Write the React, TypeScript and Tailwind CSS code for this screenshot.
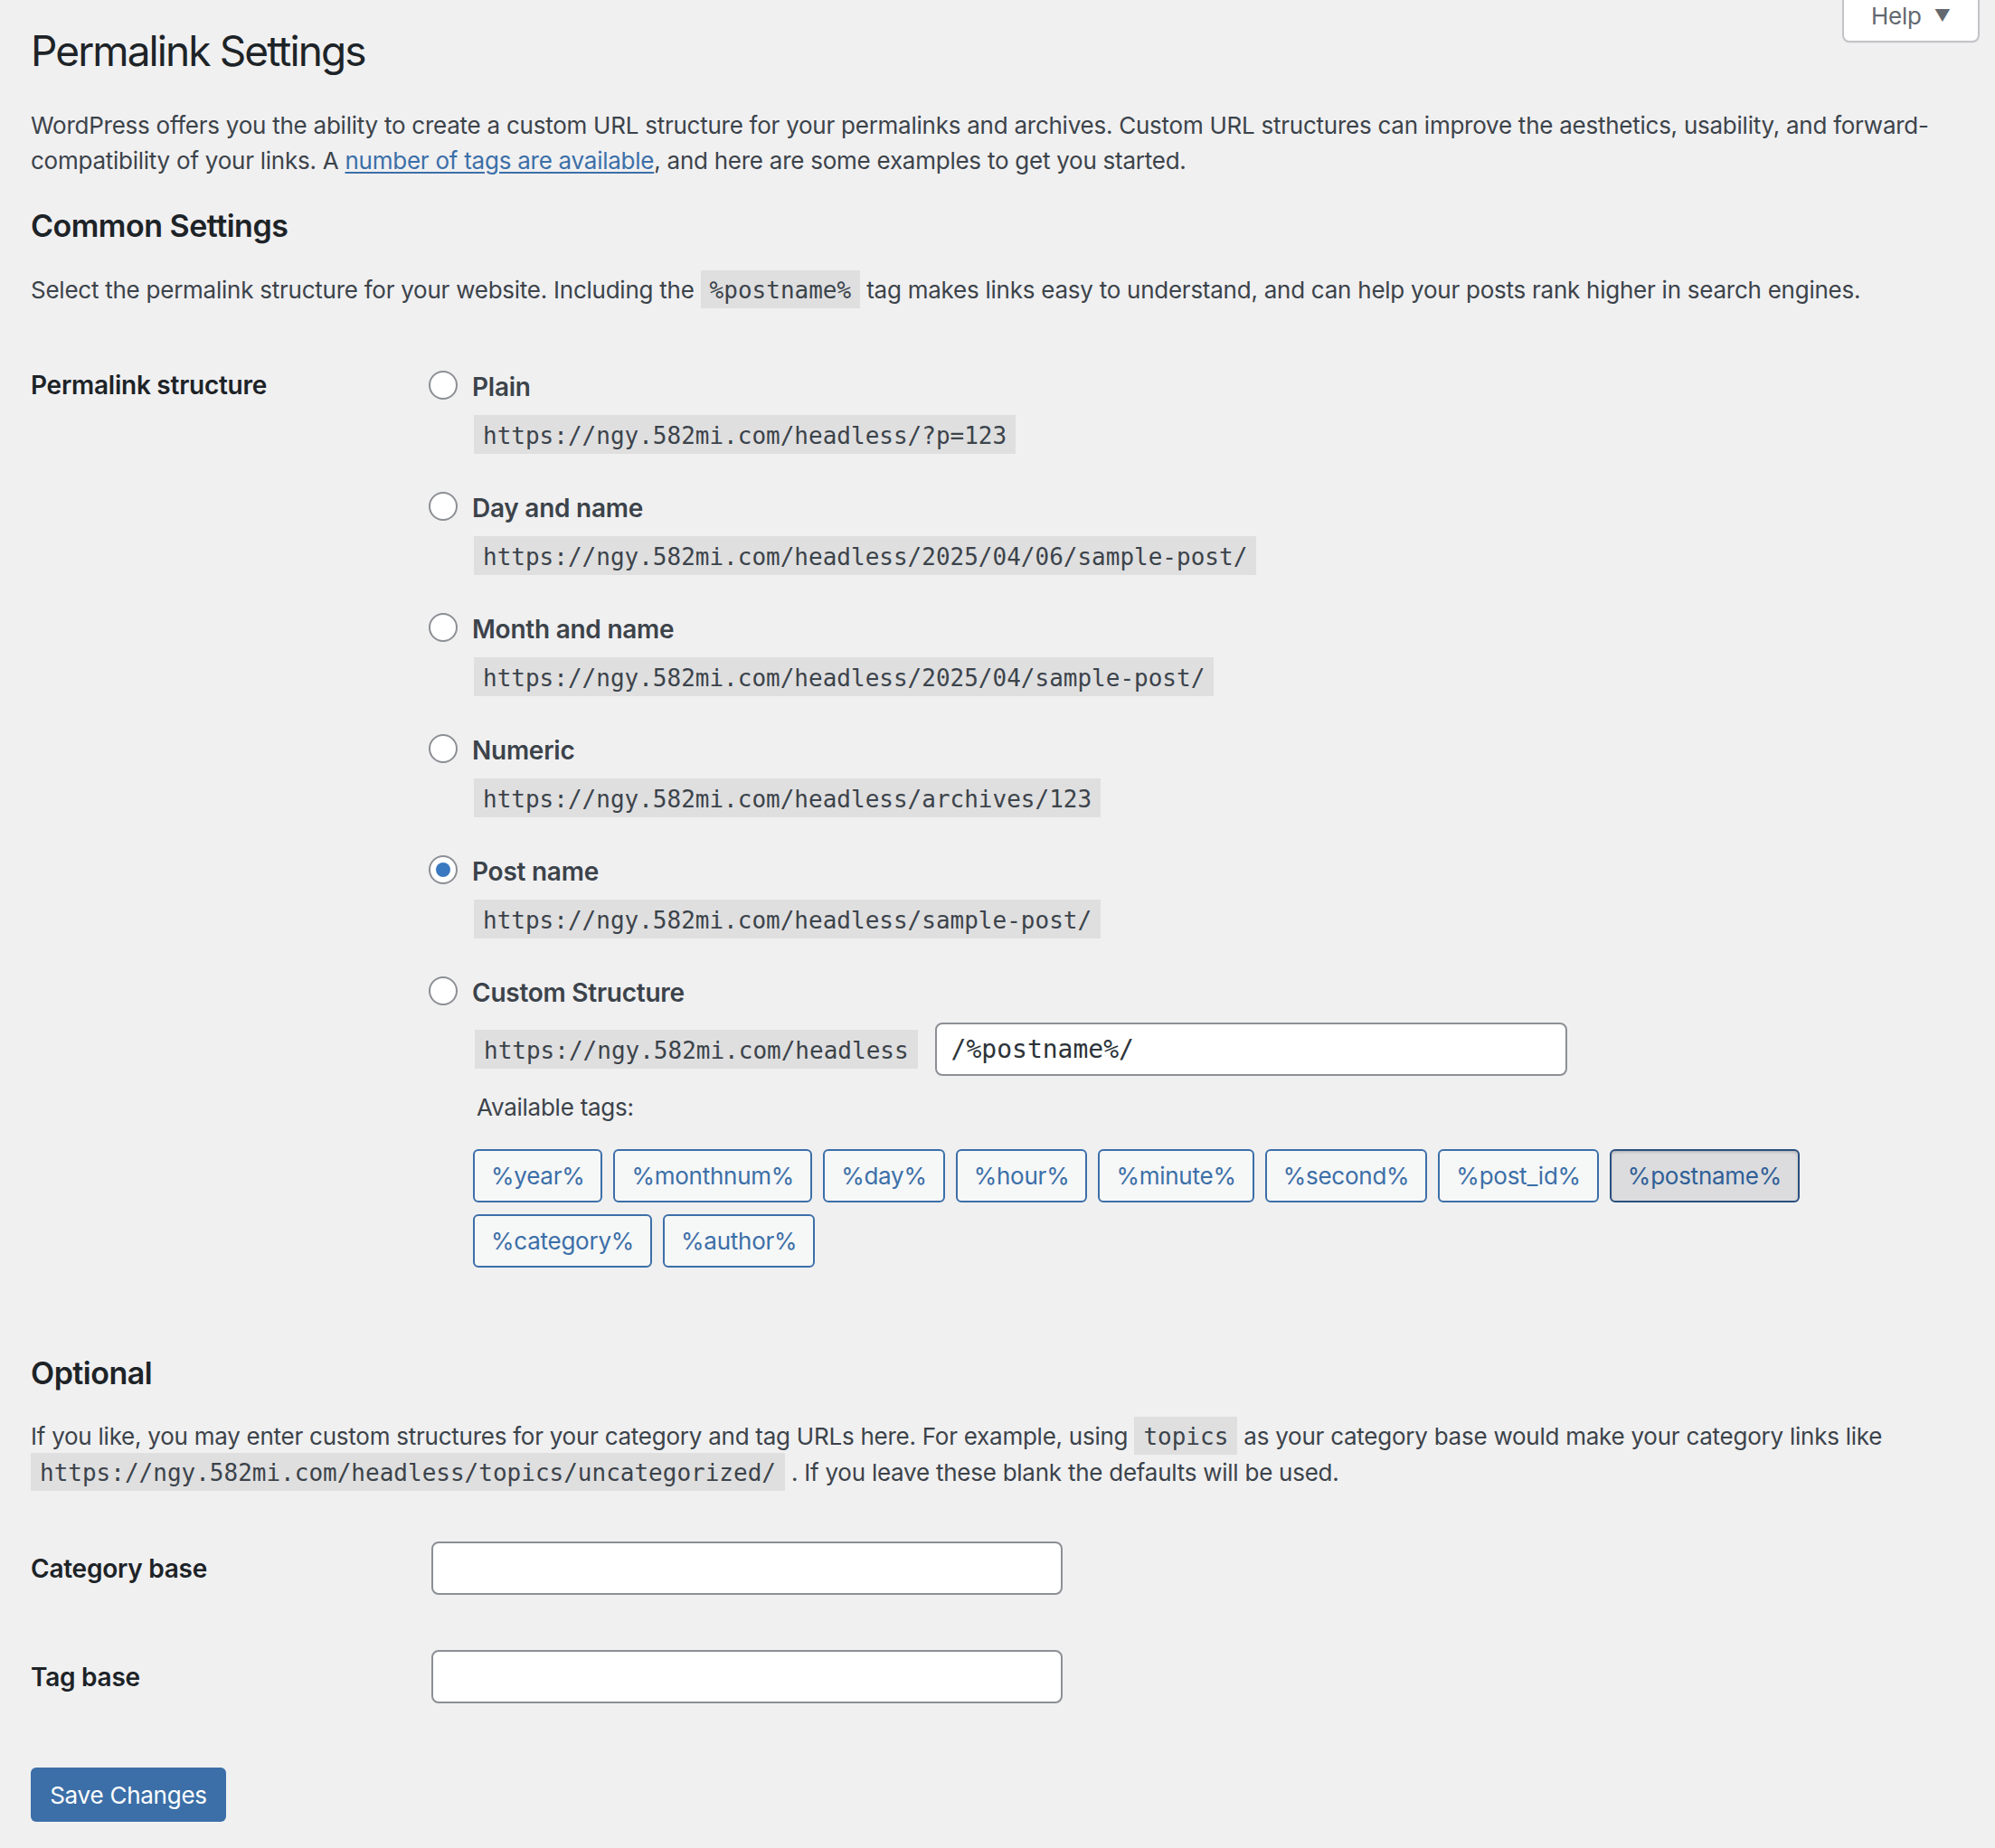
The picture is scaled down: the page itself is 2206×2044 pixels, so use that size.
import React from 'react';

const SITE = 'https://ngy.582mi.com/headless';

const options = [
  { id: 'plain', label: 'Plain', example: `${SITE}/?p=123` },
  { id: 'day', label: 'Day and name', example: `${SITE}/2025/04/06/sample-post/` },
  { id: 'month', label: 'Month and name', example: `${SITE}/2025/04/sample-post/` },
  { id: 'numeric', label: 'Numeric', example: `${SITE}/archives/123` },
  { id: 'post', label: 'Post name', example: `${SITE}/sample-post/` },
];

const tags = [
  '%year%',
  '%monthnum%',
  '%day%',
  '%hour%',
  '%minute%',
  '%second%',
  '%post_id%',
  '%postname%',
  '%category%',
  '%author%',
];

// standalone code sample (its own row)
const CodeBlock: React.FC<{ children: React.ReactNode }> = ({ children }) => (
  <code className="block bg-black/[0.07] px-[10px] pt-[8px] pb-[4px] font-['DejaVu_Sans_Mono',monospace] text-[26px] leading-[31px] tracking-normal text-[#3c434a]">
    {children}
  </code>
);

// code inside running text
const Code: React.FC<{ children: React.ReactNode }> = ({ children }) => (
  <code className="bg-black/[0.07] px-[10px] pt-[7px] pb-[5px] font-['DejaVu_Sans_Mono',monospace] text-[26px] tracking-normal text-[#3c434a]">
    {children}
  </code>
);

const Radio: React.FC<{ checked?: boolean }> = ({ checked }) => (
  <span className="flex h-[32px] w-[32px] shrink-0 items-center justify-center rounded-full border-2 border-[#8c8f94] bg-white">
    {checked && <span className="h-[16px] w-[16px] rounded-full bg-[#3a78c0]" />}
  </span>
);

export default function App() {
  const selected = 'post';

  return (
    <div className="relative min-h-[2044px] w-full bg-[#f0f0f1] font-['Inter','Liberation_Sans',sans-serif] text-[#3c434a]">
      {/* help tab */}
      <button className="absolute right-[17px] top-[-2px] flex h-[49px] w-[152px] items-center justify-center gap-[14px] rounded-b-[8px] border-2 border-[#c3c4c7] bg-white pb-[10px] text-[26px] text-[#646970] shadow-[0_1px_1px_rgba(0,0,0,0.04)]">
        <span className="tracking-[-0.2px]">Help</span>
        <span className="text-[18px]">▼</span>
      </button>

      <div className="pl-[34px] pr-[60px] tracking-[-0.25px]">
        <h1 className="pt-[26px] text-[46px] font-normal leading-[60px] tracking-[-1.9px] text-[#1d2327]">
          Permalink Settings
        </h1>

        <p className="mt-[33px] text-[26px] leading-[39px]">
          WordPress offers you the ability to create a custom URL structure for your permalinks and archives. Custom
          URL structures can improve the aesthetics, usability, and forward-compatibility of your links. A{' '}
          <a href="#" className="text-[#3c6fa8] underline underline-offset-[3px]">
            number of tags are available
          </a>
          , and here are some examples to get you started.
        </p>

        <h2 className="mt-[31px] text-[34px] font-semibold leading-[44px] tracking-[-0.5px] text-[#1d2327]">
          Common Settings
        </h2>

        <p className="mt-[29px] text-[26px] leading-[39px]">
          Select the permalink structure for your website. Including the <Code>%postname%</Code> tag makes links easy
          to understand, and can help your posts rank higher in search engines.
        </p>

        {/* permalink structure */}
        <div className="mt-[69px] flex">
          <div className="w-[440px] shrink-0 text-[28px] font-semibold leading-[32px] text-[#1d2327]">
            Permalink structure
          </div>
          <div className="flex flex-col">
            {options.map((o) => (
              <div key={o.id} className="mb-[42px] flex flex-col">
                <label className="flex items-start gap-[16px]">
                  <Radio checked={o.id === selected} />
                  <span className="mt-[2px] text-[28px] font-semibold leading-[32px]">{o.label}</span>
                </label>
                <div className="mt-[15px] flex pl-[50px]">
                  <CodeBlock>{o.example}</CodeBlock>
                </div>
              </div>
            ))}

            <div className="flex flex-col">
              <label className="flex items-start gap-[16px]">
                <Radio />
                <span className="mt-[2px] text-[28px] font-semibold leading-[32px]">Custom Structure</span>
              </label>
              <div className="mt-[17px] flex items-center gap-[19px] pl-[51px]">
                <CodeBlock>{SITE}</CodeBlock>
                <input
                  type="text"
                  defaultValue="/%postname%/"
                  className="h-[59px] w-[699px] rounded-[8px] border-2 border-[#8c8f94] bg-white px-[16px] font-['DejaVu_Sans_Mono',monospace] text-[28px] tracking-normal text-[#2c3338] outline-none"
                />
              </div>
              <div className="mt-[15px] pl-[53px] text-[26px] leading-[39px]">Available tags:</div>
              <ul className="mt-[27px] flex w-[1620px] flex-wrap gap-x-[12px] gap-y-[13px] pl-[49px]">
                {tags.map((t) =>
                  t === '%postname%' ? (
                    <li key={t}>
                      <button className="h-[59px] rounded-[6px] border-2 border-[#2a4f7e] bg-[#dcdcde] px-[18px] text-[26px] text-[#2f5f97] shadow-[inset_0_2px_5px_-3px_rgba(0,0,0,0.5)]">
                        {t}
                      </button>
                    </li>
                  ) : (
                    <li key={t}>
                      <button className="h-[59px] rounded-[6px] border-2 border-[#3c6fa8] bg-[#f6f7f7] px-[18px] text-[26px] text-[#3c6fa8]">
                        {t}
                      </button>
                    </li>
                  )
                )}
              </ul>
            </div>
          </div>
        </div>

        <h2 className="mt-[95px] text-[34px] font-semibold leading-[44px] tracking-[-0.5px] text-[#1d2327]">
          Optional
        </h2>

        <p className="mt-[28px] text-[26px] leading-[39px]">
          If you like, you may enter custom structures for your category and tag URLs here. For example, using{' '}
          <Code>topics</Code> as your category base would make your category links like{' '}
          <Code>{SITE}/topics/uncategorized/</Code> . If you leave these blank the defaults will be used.
        </p>

        <div className="mt-[56px] flex flex-col gap-[61px]">
          {['Category base', 'Tag base'].map((l) => (
            <div key={l} className="flex items-center">
              <div className="w-[443px] shrink-0 text-[28px] font-semibold leading-[32px] text-[#1d2327]">{l}</div>
              <input
                type="text"
                className="h-[59px] w-[698px] rounded-[8px] border-2 border-[#8c8f94] bg-white px-[16px] text-[28px] outline-none"
              />
            </div>
          ))}
        </div>

        <button className="mt-[71px] h-[60px] w-[216px] rounded-[6px] bg-[#3c6fa8] text-[26px] text-white">
          Save Changes
        </button>
      </div>
    </div>
  );
}
